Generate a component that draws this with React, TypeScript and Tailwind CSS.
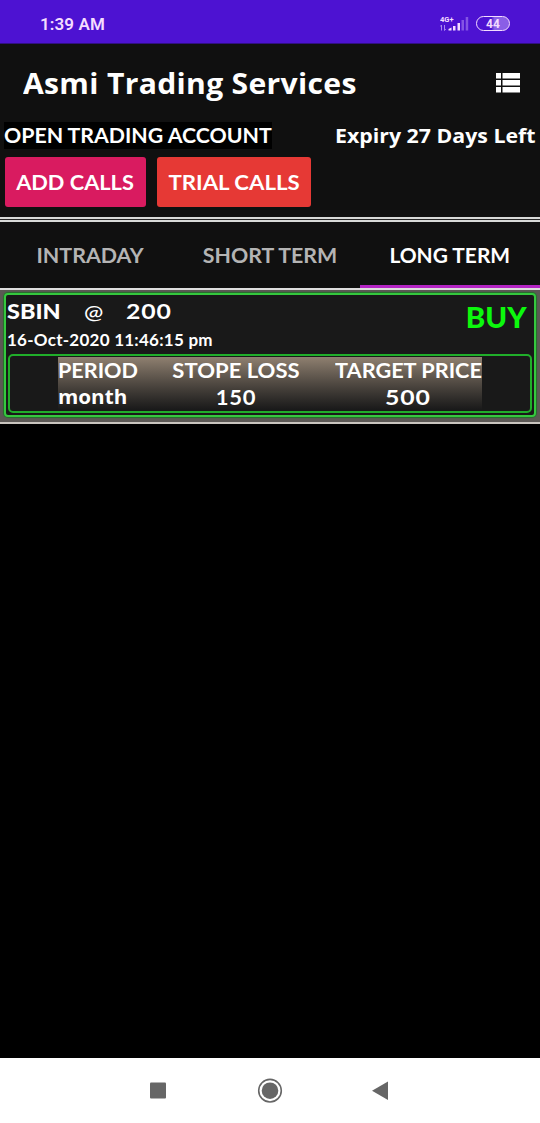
import React from "react";

const tabs = [
  { name: "INTRADAY", stretch: "scale-x-[1.07]" },
  { name: "SHORT TERM", stretch: "scale-x-[1.067]" },
  { name: "LONG TERM", stretch: "scale-x-[1.045]" },
];

function StatusBar() {
  return (
    <div className="flex h-[44px] shrink-0 items-center border-b border-[#301080] bg-[#4d12d2] pt-[4px] pl-[40px] pr-[30px] text-[#f4dcff]">
      <span className="font-['Roboto',sans-serif] text-[17px] font-semibold leading-[20px] tracking-[0.1px]">1:39 AM</span>
      <svg className="ml-auto h-[18px] w-[29px]" viewBox="0 0 29 18">
        <text x="0" y="6.5" fontFamily="Roboto, sans-serif" fontSize="7.5" fontWeight="700" fill="#f4dcff">4G+</text>
        <path d="M1.5 15.5V10M0.3 11.5L1.5 10M4.5 10V15.5M5.7 14L4.5 15.5" stroke="#a987f0" strokeWidth="1" fill="none" />
        <path d="M8.5 15.5V14L11.5 12.5V15.5ZM13 11H15.5V15.5H13ZM17.5 8H20V15.5H17.5Z" fill="#f4dcff" />
        <path d="M21.5 5H24V15.5H21.5ZM25.7 2H28.2V15.5H25.7Z" fill="#8455e4" />
      </svg>
      <div className="ml-[7px] flex h-[15px] w-[34px] items-center justify-center rounded-full border-[1.5px] border-[#f4dcff] bg-linear-to-r from-[#4d12d2] from-45% via-[#8a5ee6] via-55% to-[#8a5ee6] font-['Roboto',sans-serif] text-[12px] font-bold leading-none">
        44
      </div>
    </div>
  );
}

function Header() {
  return (
    <header className="h-[173px] shrink-0 bg-[#101010]">
      <div className="flex h-[78px] items-center justify-between pl-[23px] pr-[20px]">
        <h1 className="origin-left scale-x-[1.075] whitespace-nowrap font-['Open_Sans',sans-serif] text-[28px] font-bold leading-[36px] tracking-[0.3px]">Asmi Trading Services</h1>
        <svg className="h-[20px] w-[24px]" viewBox="0 0 24 20" fill="#fff">
          <path d="M0 0H5V5.5H0ZM6.5 0H24V5.5H6.5ZM0 7H5V12.5H0ZM6.5 7H24V12.5H6.5ZM0 14H5V19.5H0ZM6.5 14H24V19.5H6.5Z" />
        </svg>
      </div>
      <div className="flex h-[27px] items-center justify-between pl-[4px] pr-[4px] text-[20px] leading-[27px]">
        <span className="w-[268px] whitespace-nowrap bg-black">
          <span className="inline-block origin-left scale-x-[1.065]">OPEN TRADING ACCOUNT</span>
        </span>
        <span className="w-[201px] whitespace-nowrap font-['Open_Sans',sans-serif] text-[19.5px]">
          <span className="inline-block origin-left scale-x-[1.093]">Expiry 27 Days Left</span>
        </span>
      </div>
      <div className="mt-[8px] flex gap-[11px] pl-[5px] text-[20px]">
        <button className="h-[50px] w-[141px] whitespace-nowrap rounded-[3px] bg-[#d91b60]">
          <span className="inline-block scale-x-[1.09]">ADD CALLS</span>
        </button>
        <button className="h-[50px] w-[154px] whitespace-nowrap rounded-[3px] bg-[#e63935]">
          <span className="inline-block scale-x-[1.11]">TRIAL CALLS</span>
        </button>
      </div>
    </header>
  );
}

function Tabs() {
  return (
    <nav className="grid h-[66px] shrink-0 grid-cols-3 bg-[#101010] text-[20px]">
      {tabs.map((tab, i) => (
        <div
          key={tab.name}
          className={
            i === 2
              ? "flex items-center justify-center border-b-[3px] border-[#b424c4] pt-[3px]"
              : "flex items-center justify-center text-[#b4b4b4]"
          }
        >
          <span className={`${tab.stretch} whitespace-nowrap`}>{tab.name}</span>
        </div>
      ))}
    </nav>
  );
}

function CallCard() {
  return (
    <section className="h-[132px] shrink-0 bg-[#5c5855] px-[4px] pt-[3px]">
      <div className="h-[124px] rounded-[4px] border-2 border-[#35c83e] bg-[#191919] px-[2px] shadow-[0_0_1px_1px_#24702b]">
        <div className="flex h-[59px] justify-between">
          <div className="-ml-px">
            <div className="flex h-[32px] items-center text-[20px] leading-none">
              <span className="flex w-[77px]"><span className="origin-left scale-x-[1.17] font-black">SBIN</span></span>
              <span className="flex w-[42px]"><span className="origin-left scale-x-[1.15] font-medium">@</span></span>
              <span className="origin-left scale-x-[1.24] tracking-[0.7px]">200</span>
            </div>
            <div className="flex h-[24px] items-center whitespace-nowrap text-[17px] leading-none tracking-[0.25px]">
              16-Oct-2020 11:46:15 pm
            </div>
          </div>
          <span className="origin-right scale-x-[1.05] pr-[5px] pt-[7px] text-[28px] font-black leading-[30px] text-[#0cf80c]">BUY</span>
        </div>
        <div className="flex h-[59px] justify-center rounded-[5px] border-2 border-[#20ae2a] pt-[1px]">
          <div className="mr-[1px] grid h-[53px] w-[424px] grid-cols-[80px_196px_148px] grid-rows-[27px_26px] bg-linear-to-b from-[#8f8070] to-[#191919] text-[20px] leading-[26px] whitespace-nowrap">
            <span className="origin-left scale-x-[1.08]">PERIOD</span>
            <span className="scale-x-[1.103] text-center">STOPE LOSS</span>
            <span className="origin-left scale-x-[1.085] pl-[1px]">TARGET PRICE</span>
            <span className="origin-left scale-x-[1.06] font-['Open_Sans',sans-serif] text-[19.5px]">month</span>
            <span className="scale-x-[1.1] text-center tracking-[0.6px]">150</span>
            <span className="scale-x-[1.24] text-center tracking-[0.7px]">500</span>
          </div>
        </div>
      </div>
    </section>
  );
}

function NavigationBar() {
  return (
    <footer className="flex h-[65px] shrink-0 justify-center gap-[97px] bg-white pt-[20px]">
      <svg className="h-[26px] w-[26px]" viewBox="0 0 26 26"><rect x="4" y="4.5" width="16" height="16" rx="1" fill="#666" /></svg>
      <svg className="-mx-[12px] h-[26px] w-[26px]" viewBox="0 0 26 26">
        <circle cx="13" cy="12.7" r="11.3" fill="none" stroke="#666" strokeWidth="1.6" />
        <circle cx="13" cy="12.7" r="8.3" fill="#666" />
      </svg>
      <svg className="h-[26px] w-[26px]" viewBox="0 0 26 26"><path d="M4 12.7L20 3.5V22Z" fill="#666" /></svg>
    </footer>
  );
}

export default function App() {
  return (
    <main className="flex h-[1123px] w-[540px] flex-col overflow-hidden bg-black font-['Lato',sans-serif] font-bold text-white">
      <StatusBar />
      <Header />
      <div className="flex h-[5px] shrink-0 flex-col justify-between bg-[#252525]">
        <div className="h-[2px] bg-[#d8dad8]" />
        <div className="h-[2px] bg-[#d8dad8]" />
      </div>
      <Tabs />
      <div className="h-[2px] shrink-0 bg-[#dedede]" />
      <CallCard />
      <div className="h-[2px] shrink-0 bg-[#c9c5bf]" />
      <div className="flex-1" />
      <NavigationBar />
    </main>
  );
}
